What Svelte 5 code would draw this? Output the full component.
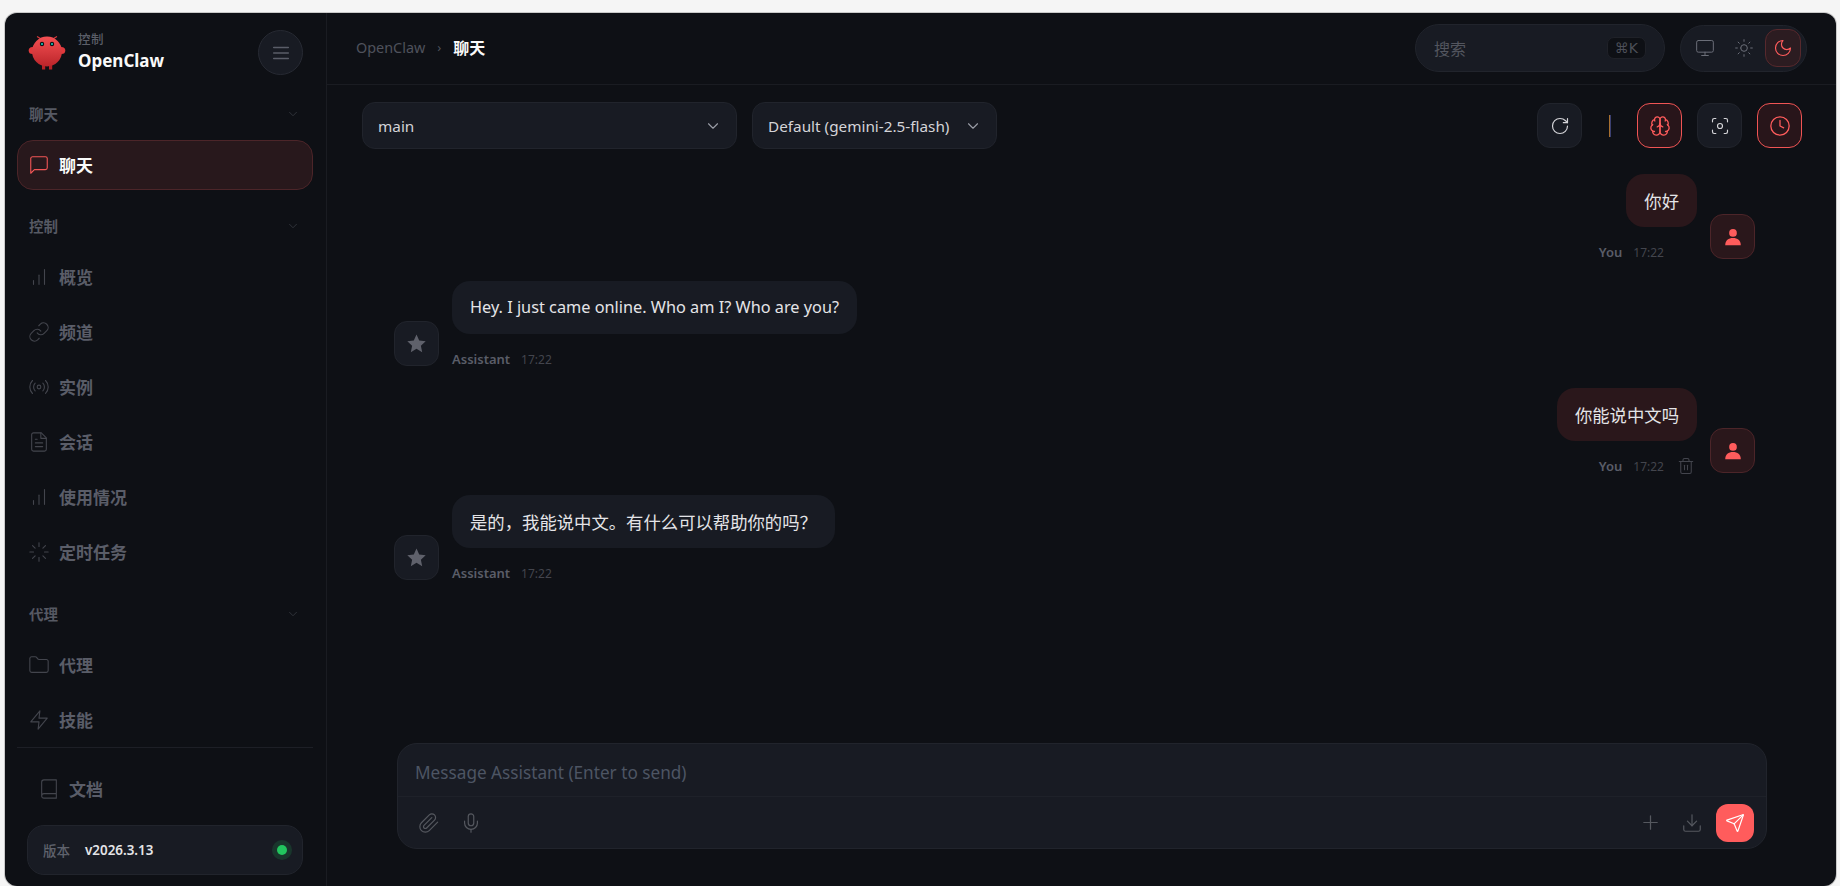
<script>
	const arc = (cx, cy, r) => `M${cx - r} ${cy}a${r} ${r} 0 1 0 ${r * 2} 0a${r} ${r} 0 1 0 ${-r * 2} 0`;

	const icons = {
		chat: ['M21 15a2 2 0 0 1-2 2H7l-4 4V5a2 2 0 0 1 2-2h14a2 2 0 0 1 2 2z'],
		bars: ['M12 20V10', 'M18 20V4', 'M6 20v-4'],
		link: ['M10 13a5 5 0 0 0 7.54.54l3-3a5 5 0 0 0-7.07-7.07l-1.72 1.71', 'M14 11a5 5 0 0 0-7.54-.54l-3 3a5 5 0 0 0 7.07 7.07l1.71-1.71'],
		radio: ['M4.9 19.1C1 15.2 1 8.8 4.9 4.9', 'M7.8 16.2c-2.3-2.3-2.3-6.1 0-8.5', arc(12, 12, 2), 'M16.2 7.8c2.3 2.3 2.3 6.1 0 8.5', 'M19.1 4.9C23 8.8 23 15.1 19.1 19'],
		file: ['M14.5 2H6a2 2 0 0 0-2 2v16a2 2 0 0 0 2 2h12a2 2 0 0 0 2-2V7.5L14.5 2z', 'M14 2v6h6', 'M16 13H8', 'M16 17H8', 'M10 9H8'],
		loader: ['M12 2v4', 'M12 18v4', 'M4.93 4.93l2.83 2.83', 'M16.24 16.24l2.83 2.83', 'M2 12h4', 'M18 12h4', 'M4.93 19.07l2.83-2.83', 'M16.24 7.76l2.83-2.83'],
		folder: ['M20 20a2 2 0 0 0 2-2V8a2 2 0 0 0-2-2h-7.9a2 2 0 0 1-1.69-.9L9.6 3.9A2 2 0 0 0 7.93 3H4a2 2 0 0 0-2 2v13a2 2 0 0 0 2 2Z'],
		zap: ['M13 2 3 14h9l-1 8 10-12h-9l1-8z'],
		book: ['M4 19.5v-15A2.5 2.5 0 0 1 6.5 2H20v20H6.5a2.5 2.5 0 0 1 0-5H20'],
		chevron: ['m6 9 6 6 6-6'],
		menu: ['M4 6h16', 'M4 12h16', 'M4 18h16'],
		monitor: ['M4 3h16a2 2 0 0 1 2 2v10a2 2 0 0 1-2 2H4a2 2 0 0 1-2-2V5a2 2 0 0 1 2-2z', 'M8 21h8', 'M12 17v4'],
		sun: [arc(12, 12, 4), 'M12 2v2', 'M12 20v2', 'm4.93 4.93 1.41 1.41', 'm17.66 17.66 1.41 1.41', 'M2 12h2', 'M20 12h2', 'm6.34 17.66-1.41 1.41', 'm19.07 4.93-1.41 1.41'],
		moon: ['M12 3a6 6 0 0 0 9 9 9 9 0 1 1-9-9Z'],
		refresh: ['M21 12a9 9 0 1 1-9-9c2.52 0 4.93 1 6.74 2.74L21 8', 'M21 3v5h-5'],
		brain: [
			'M12 5a3 3 0 1 0-5.997.125 4 4 0 0 0-2.526 5.77 4 4 0 0 0 .556 6.588A4 4 0 1 0 12 18Z',
			'M12 5a3 3 0 1 1 5.997.125 4 4 0 0 1 2.526 5.77 4 4 0 0 1-.556 6.588A4 4 0 1 1 12 18Z',
			'M15 13a4.5 4.5 0 0 1-3-4 4.5 4.5 0 0 1-3 4',
			'M17.599 6.5a3 3 0 0 0 .399-1.375',
			'M6.003 5.125A3 3 0 0 0 6.401 6.5',
			'M3.477 10.896a4 4 0 0 1 .585-.396',
			'M19.938 10.5a4 4 0 0 1 .585.396',
			'M6 18a4 4 0 0 1-1.967-.516',
			'M19.967 17.484A4 4 0 0 1 18 18'
		],
		scan: ['M3 7V5a2 2 0 0 1 2-2h2', 'M17 3h2a2 2 0 0 1 2 2v2', 'M21 17v2a2 2 0 0 1-2 2h-2', 'M7 21H5a2 2 0 0 1-2-2v-2', arc(12, 12, 3)],
		clock: [arc(12, 12, 10), 'M12 6v6l4 2'],
		trash: ['M3 6h18', 'M19 6v14c0 1-1 2-2 2H7c-1 0-2-1-2-2V6', 'M8 6V4c0-1 1-2 2-2h4c1 0 2 1 2 2v2', 'M10 11v6', 'M14 11v6'],
		clip: ['m21.44 11.05-9.19 9.19a6 6 0 0 1-8.49-8.49l8.57-8.57A4 4 0 1 1 18 8.84l-8.59 8.57a2 2 0 0 1-2.83-2.83l8.49-8.48'],
		mic: ['M12 2a3 3 0 0 0-3 3v7a3 3 0 0 0 6 0V5a3 3 0 0 0-3-3Z', 'M19 10v2a7 7 0 0 1-14 0v-2', 'M12 19v3'],
		plus: ['M5 12h14', 'M12 5v14'],
		download: ['M12 15V3', 'M21 15v4a2 2 0 0 1-2 2H5a2 2 0 0 1-2-2v-4', 'm7 10 5 5 5-5'],
		send: ['M14.536 21.686a.5.5 0 0 0 .937-.024l6.5-19a.496.496 0 0 0-.635-.635l-19 6.5a.5.5 0 0 0-.024.937l7.93 3.18a2 2 0 0 1 1.112 1.11z', 'm21.854 2.147-10.94 10.939']
	};

	const navGroups = [
		{ label: '聊天', items: [{ icon: 'chat', text: '聊天', active: true }] },
		{
			label: '控制',
			items: [
				{ icon: 'bars', text: '概览' },
				{ icon: 'link', text: '频道' },
				{ icon: 'radio', text: '实例' },
				{ icon: 'file', text: '会话' },
				{ icon: 'bars', text: '使用情况' },
				{ icon: 'loader', text: '定时任务' }
			]
		},
		{
			label: '代理',
			items: [
				{ icon: 'folder', text: '代理' },
				{ icon: 'zap', text: '技能' }
			]
		}
	];

	const messages = [
		{ user: true, zh: true, text: '你好' },
		{ user: false, text: 'Hey. I just came online. Who am I? Who are you?' },
		{ user: true, zh: true, text: '你能说中文吗', trash: true },
		{ user: false, zh: true, text: '是的，我能说中文。有什么可以帮助你的吗？' }
	];
</script>

{#snippet icon(name, size = 18, width = 1.5)}
	<svg class="icon" viewBox="0 0 24 24" style="width:{size}px;height:{size}px;stroke-width:{width}">
		{#each icons[name] as d}
			<path {d} />
		{/each}
	</svg>
{/snippet}

<div class="shell">
	<aside class="sidebar">
		<div class="brand">
			<svg class="logo" viewBox="0 0 38 38">
				<defs>
					<linearGradient id="claw" x1="0" y1="0" x2="0" y2="1">
						<stop offset="0" stop-color="#f55053" />
						<stop offset="1" stop-color="#bb252a" />
					</linearGradient>
				</defs>
				<path d="M15 6 9 2.5M23 6l6-3.5" stroke="#d63a3d" stroke-width="1.2" fill="none" />
				<ellipse cx="4.6" cy="16.5" rx="3.9" ry="3.5" fill="#e0393c" />
				<ellipse cx="33.4" cy="16.5" rx="3.9" ry="3.5" fill="#e0393c" />
				<rect x="14" y="28" width="3.2" height="7.5" fill="#b42226" />
				<rect x="21" y="28" width="3.2" height="7.5" fill="#b42226" />
				<circle cx="19" cy="17.5" r="15" fill="url(#claw)" />
				<circle cx="14" cy="10" r="2.2" fill="#0c1116" />
				<circle cx="24" cy="10" r="2.2" fill="#0c1116" />
				<circle cx="14" cy="10" r="1" fill="#19d6c8" />
				<circle cx="24" cy="10" r="1" fill="#19d6c8" />
			</svg>
			<div class="brand-text">
				<span class="brand-sub">控制</span>
				<span class="brand-name">OpenClaw</span>
			</div>
			<button class="menu-btn">{@render icon('menu', 22, 1.6)}</button>
		</div>

		<nav class="nav">
			{#each navGroups as group}
				<div class="nav-group">
					<div class="nav-label">
						<span>{group.label}</span>
						{@render icon('chevron', 14, 1.2)}
					</div>
					{#each group.items as item}
						<div class="nav-item" class:active={item.active}>
							{@render icon(item.icon, 22, 1.2)}
							<span>{item.text}</span>
						</div>
					{/each}
				</div>
			{/each}
		</nav>

		<div class="side-foot">
			<div class="doc-link">
				{@render icon('book', 22, 1.2)}
				<span>文档</span>
			</div>
			<div class="version">
				<span class="version-label">版本</span>
				<span class="version-num">v2026.3.13</span>
				<span class="status-dot"></span>
			</div>
		</div>
	</aside>

	<main class="main">
		<header class="topbar">
			<div class="crumbs">
				<span class="crumb-root">OpenClaw</span>
				<span class="crumb-sep">›</span>
				<span class="crumb-now">聊天</span>
			</div>
			<div class="top-right">
				<div class="search">
					<span>搜索</span>
					<kbd>⌘K</kbd>
				</div>
				<div class="theme">
					<span class="theme-btn">{@render icon('monitor', 20, 1.2)}</span>
					<span class="theme-btn">{@render icon('sun', 20, 1.2)}</span>
					<span class="theme-btn on">{@render icon('moon', 20, 1.4)}</span>
				</div>
			</div>
		</header>

		<div class="controls">
			<div class="select wide">
				<span>main</span>
				{@render icon('chevron', 18, 1.5)}
			</div>
			<div class="select">
				<span>Default (gemini-2.5-flash)</span>
				{@render icon('chevron', 18, 1.5)}
			</div>
			<div class="tools">
				<button class="tool">{@render icon('refresh', 20, 1.4)}</button>
				<span class="tool-sep"></span>
				<button class="tool hot">{@render icon('brain', 22, 1.4)}</button>
				<button class="tool">{@render icon('scan', 20, 1.4)}</button>
				<button class="tool hot">{@render icon('clock', 22, 1.4)}</button>
			</div>
		</div>

		<section class="thread">
			{#each messages as msg}
				<div class="group" class:mine={msg.user}>
					{#if !msg.user}
						<div class="avatar bot">
							<svg viewBox="0 0 24 24" width="21" height="21"><path d="m12 1.8 3.1 6.9 7.4.8-5.5 5 1.5 7.4-6.5-3.8-6.5 3.8 1.5-7.4-5.5-5 7.4-.8z" /></svg>
						</div>
					{/if}
					<div class="body">
						<div class="bubble" class:zh={msg.zh}>{msg.text}</div>
						<div class="meta">
							<span class="who">{msg.user ? 'You' : 'Assistant'}</span>
							<span class="time">17:22</span>
							{#if msg.user}
								<span class="del" class:hidden={!msg.trash}>{@render icon('trash', 18, 1.4)}</span>
							{/if}
						</div>
					</div>
					{#if msg.user}
						<div class="avatar me">
							<svg viewBox="0 0 24 24" width="22" height="22"><circle cx="12" cy="7.5" r="4.2" /><path d="M3.5 21c0-5 3.6-7.8 8.5-7.8s8.5 2.8 8.5 7.8z" /></svg>
						</div>
					{/if}
				</div>
			{/each}
		</section>

		<div class="compose">
			<div class="compose-input">Message Assistant (Enter to send)</div>
			<div class="compose-bar">
				<span class="bar-btn">{@render icon('clip', 22, 1.3)}</span>
				<span class="bar-btn">{@render icon('mic', 22, 1.3)}</span>
				<span class="spacer"></span>
				<span class="bar-btn">{@render icon('plus', 23, 1.3)}</span>
				<span class="bar-btn">{@render icon('download', 22, 1.3)}</span>
				<button class="send">{@render icon('send', 20, 1.4)}</button>
			</div>
		</div>
	</main>
</div>

<style>
	:global(body) {
		margin: 0;
		background: #f5f5f5;
		overflow: hidden;
		font-family: 'Noto Sans', 'Noto Sans CJK SC', sans-serif;
	}

	.icon {
		fill: none;
		stroke: currentColor;
		stroke-linecap: round;
		stroke-linejoin: round;
		flex-shrink: 0;
		display: block;
	}

	button {
		font: inherit;
		padding: 0;
		cursor: pointer;
	}

	.shell {
		display: flex;
		height: 873px;
		margin: 13px 4px 0 5px;
		background: #0e1015;
		border-radius: 12px;
		overflow: hidden;
		box-shadow: 0 0 0 1px #c9c9c9;
		color: #e4e4e7;
	}

	/* sidebar */
	.sidebar {
		width: 321px;
		flex-shrink: 0;
		border-right: 1px solid #1a1c22;
		display: flex;
		flex-direction: column;
	}

	.brand {
		display: flex;
		align-items: center;
		height: 87px;
		padding: 0 23px 8px 23px;
		box-sizing: border-box;
		gap: 12px;
	}

	.logo {
		width: 38px;
		height: 38px;
		flex-shrink: 0;
	}

	.brand-text {
		display: flex;
		flex-direction: column;
		flex: 1;
		gap: 3px;
		margin-top: -1px;
	}

	.brand-sub {
		font-size: 12.5px;
		line-height: 14px;
		color: #5b5e68;
		font-weight: 500;
		letter-spacing: 0.5px;
	}

	.brand-name {
		font-size: 17px;
		line-height: 21px;
		font-weight: 700;
		color: #fafafa;
	}

	.menu-btn {
		width: 45px;
		height: 45px;
		border-radius: 50%;
		background: #181b23;
		border: 1px solid #272a33;
		color: #5a5d68;
		display: flex;
		align-items: center;
		justify-content: center;
	}

	.nav {
		flex: 1;
		padding: 0 13px 0 12px;
		display: flex;
		flex-direction: column;
		gap: 22px;
		overflow: hidden;
	}

	.nav-group {
		display: flex;
		flex-direction: column;
		gap: 5px;
	}

	.nav-group:last-child {
		margin-top: 1px;
	}

	.nav-label {
		display: flex;
		align-items: center;
		justify-content: space-between;
		height: 28px;
		margin-bottom: 7px;
		padding: 0 13px 1px 12px;
		box-sizing: border-box;
		font-size: 14.5px;
		font-weight: 600;
		color: #565963;
	}

	.nav-label .icon {
		color: #3e4048;
	}

	.nav-item {
		display: flex;
		align-items: center;
		gap: 9px;
		height: 50px;
		padding: 0 10px 2px;
		box-sizing: border-box;
		border: 1px solid transparent;
		border-radius: 16px;
		font-size: 17px;
		font-weight: 600;
		color: #5a5d68;
	}

	.nav-item .icon {
		color: #43454d;
		margin-top: 2px;
	}

	.nav-item.active {
		background: #28181c;
		border-color: #4c2529;
		color: #fafafa;
	}

	.nav-item.active .icon {
		color: #f25656;
	}

	.side-foot {
		margin: 0 13px 0 12px;
		border-top: 1px solid #1d1f26;
		padding: 0 10px 11px;
		display: flex;
		flex-direction: column;
	}

	.doc-link {
		display: flex;
		align-items: center;
		gap: 9px;
		height: 77px;
		box-sizing: border-box;
		padding: 4px 0 0 11px;
		font-size: 17px;
		font-weight: 600;
		color: #5a5d68;
	}

	.doc-link .icon {
		color: #43454d;
	}

	.version {
		display: flex;
		align-items: center;
		height: 50px;
		padding: 0 10px 0 15px;
		border-radius: 17px;
		background: #181b23;
		border: 1px solid #21242c;
		box-sizing: border-box;
	}

	.version-label {
		font-size: 13.5px;
		font-weight: 500;
		color: #5f626c;
		margin-right: 15px;
	}

	.version-num {
		flex: 1;
		font-size: 13.4px;
		font-weight: 600;
		color: #e4e4e7;
	}

	.status-dot {
		width: 10px;
		height: 10px;
		border-radius: 50%;
		background: #22c55e;
		box-shadow: 0 0 0 5px rgba(34, 197, 94, 0.16);
		margin-right: 5px;
	}

	/* main column */
	.main {
		flex: 1;
		min-width: 0;
		display: flex;
		flex-direction: column;
	}

	.topbar {
		display: flex;
		align-items: center;
		justify-content: space-between;
		height: 72px;
		box-sizing: border-box;
		border-bottom: 1px solid #1a1c22;
		padding: 0 29px 1px 29px;
		flex-shrink: 0;
	}

	.crumbs {
		display: flex;
		align-items: center;
		gap: 12px;
		font-size: 14.4px;
		margin-top: -2px;
	}

	.crumb-root {
		color: #4f525c;
	}

	.crumb-sep {
		color: #4f525c;
		font-size: 13px;
	}

	.crumb-now {
		font-size: 16px;
		color: #fafafa;
		font-weight: 700;
	}

	.top-right {
		display: flex;
		align-items: center;
		gap: 15px;
	}

	.search {
		width: 250px;
		height: 48px;
		box-sizing: border-box;
		display: flex;
		align-items: center;
		justify-content: space-between;
		padding: 0 18px;
		border-radius: 24px;
		background: #181b23;
		border: 1px solid #21242c;
		font-size: 16px;
		color: #53565f;
	}

	kbd {
		font-family: 'DejaVu Sans', 'Noto Sans', sans-serif;
		font-size: 14px;
		height: 20px;
		line-height: 20px;
		padding: 0 7px;
		border-radius: 7px;
		background: #0e1015;
		border: 1px solid #1f2128;
		color: #4c4f58;
	}

	.theme {
		width: 127px;
		height: 47px;
		box-sizing: border-box;
		display: flex;
		align-items: center;
		gap: 3px;
		padding: 0 5px 0 6px;
		border-radius: 24px;
		background: #181b23;
		border: 1px solid #21242c;
	}

	.theme-btn {
		width: 37px;
		height: 38px;
		box-sizing: border-box;
		display: flex;
		align-items: center;
		justify-content: center;
		border-radius: 12px;
		color: #6b6e78;
		border: 1px solid transparent;
	}

	.theme-btn.on {
		background: #2c1c21;
		border-color: #57292d;
		color: #ff5c5c;
	}

	.controls {
		display: flex;
		align-items: center;
		gap: 15px;
		padding: 17px 34px 0 35px;
		flex-shrink: 0;
	}

	.select {
		height: 47px;
		box-sizing: border-box;
		display: flex;
		align-items: center;
		justify-content: space-between;
		gap: 15px;
		padding: 0 14px 0 15px;
		border-radius: 13px;
		background: #181b23;
		border: 1px solid #21242c;
		font-size: 15.3px;
		color: #d4d4d8;
	}

	.select .icon {
		color: #9a9da6;
	}

	.select.wide {
		width: 375px;
	}

	.tools {
		margin-left: auto;
		display: flex;
		align-items: center;
		gap: 15px;
	}

	.tool {
		width: 45px;
		height: 45px;
		border-radius: 13px;
		background: #181b23;
		border: 1px solid #21242c;
		color: #d4d4d8;
		display: flex;
		align-items: center;
		justify-content: center;
	}

	.tool.hot {
		background: #28151a;
		border-color: #f05454;
		color: #ff5c5c;
	}

	.tool-sep {
		width: 2px;
		height: 22px;
		background: linear-gradient(90deg, #a87030 50%, #3a3f70 50%);
		margin: 0 11px 0 12px;
	}

	/* messages */
	.thread {
		flex: 1;
		min-height: 0;
		display: flex;
		flex-direction: column;
		gap: 22px;
		padding: 25px 81px 0 67px;
	}

	.group {
		display: flex;
		align-items: flex-end;
		gap: 13px;
	}

	.group.mine {
		justify-content: flex-end;
	}

	.body {
		display: flex;
		flex-direction: column;
		align-items: flex-start;
	}

	.mine .body {
		align-items: flex-end;
	}

	.bubble {
		height: 53px;
		box-sizing: border-box;
		padding: 0 18px 1px;
		display: flex;
		align-items: center;
		border-radius: 18px;
		font-size: 16.3px;
		background: #181b23;
		color: #e4e4e7;
	}

	.bubble.zh {
		font-size: 17.35px;
	}

	.mine .bubble {
		background: #2a171b;
	}

	.meta {
		display: flex;
		align-items: center;
		gap: 11px;
		height: 14px;
		margin-top: 18px;
		font-size: 13px;
	}

	.who {
		font-weight: 600;
		color: #5a5d68;
	}

	.time {
		font-size: 12px;
		color: #43454d;
	}

	.del {
		color: #43454d;
		margin-left: 2px;
		margin-right: 2px;
	}

	.hidden {
		visibility: hidden;
	}

	.avatar {
		width: 45px;
		height: 45px;
		box-sizing: border-box;
		border-radius: 13px;
		display: flex;
		align-items: center;
		justify-content: center;
		flex-shrink: 0;
	}

	.avatar.bot {
		background: #181b23;
		border: 1px solid #21242c;
		fill: #5f616b;
	}

	.avatar.me {
		background: #2a171b;
		border: 1px solid #4c2529;
		fill: #ff5c5c;
	}

	/* composer */
	.compose {
		margin: 0 69px 37px 70px;
		height: 106px;
		box-sizing: border-box;
		border-radius: 20px;
		background: #181b23;
		border: 1px solid #21242c;
		flex-shrink: 0;
		display: flex;
		flex-direction: column;
	}

	.compose-input {
		height: 53px;
		box-sizing: border-box;
		border-bottom: 1px solid #1e2129;
		padding: 4px 17px 0;
		display: flex;
		align-items: center;
		font-size: 17.2px;
		color: #4d5563;
	}

	.compose-bar {
		flex: 1;
		display: flex;
		align-items: center;
		gap: 14px;
		padding: 0 12px 0 17px;
		color: #55585f;
	}

	.bar-btn {
		width: 28px;
		height: 28px;
		display: flex;
		align-items: center;
		justify-content: center;
	}

	.spacer {
		flex: 1;
	}

	.send {
		width: 38px;
		height: 38px;
		margin-left: -4px;
		border: 0;
		border-radius: 12px;
		background: #ff5c5c;
		color: #fff;
		display: flex;
		align-items: center;
		justify-content: center;
	}
</style>
